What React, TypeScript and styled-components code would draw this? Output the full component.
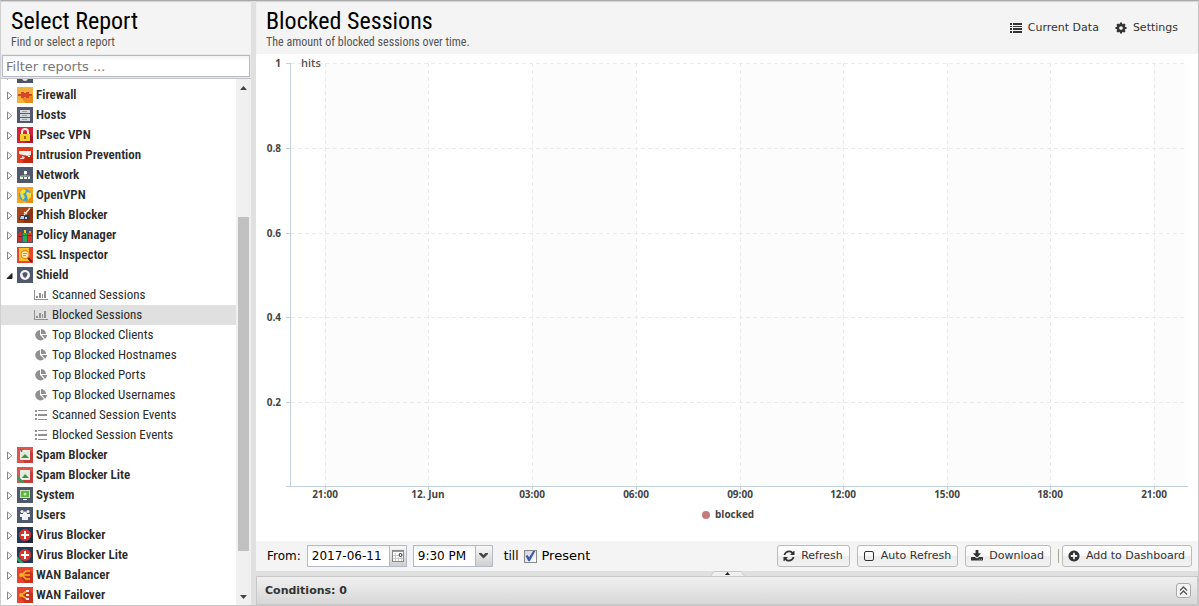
import React, { useLayoutEffect, useRef } from "react";
import styled, { createGlobalStyle } from "styled-components";

const condensed = `"Roboto Condensed", "Liberation Sans Narrow", "Arial Narrow", Roboto, sans-serif`;
const ui = `"DejaVu Sans", Verdana, sans-serif`;

const GlobalStyle = createGlobalStyle`
  *, *::before, *::after { box-sizing: border-box; }
  body { margin: 0; background: #e0e0e0; color: #000; font: 12px/16px ${ui}; }
  h1, h2, p, ul { margin: 0; padding: 0; }
  ul { list-style: none; }
  button, input, select { font: inherit; color: inherit; margin: 0; }
`;

const Page = styled.div`
  display: flex;
  gap: 5px;
  height: 100vh;
  border: 1px solid #c8c8c8;
  border-top: 1px solid #a9a9a9;
  border-left-color: #d0d0d0;
  overflow: hidden;
`;

const Sidebar = styled.aside`
  display: flex;
  flex-direction: column;
  flex: 0 0 250px;
  min-height: 0;
  background: #f4f4f4;
`;

const Main = styled.main`
  display: flex;
  flex-direction: column;
  flex: 1;
  min-width: 0;
`;

const Header = styled.header`
  display: flex;
  justify-content: space-between;
  flex: none;
  height: 53px;
  padding: 6px 10px 0;
  background: #f4f4f4;
  box-shadow: inset 0 1px 1px #d4d4d4;
`;

const Title = styled.h1`
  font: 400 24px/28px ${condensed};
  color: #000;
`;

const Subtitle = styled.p`
  font: 400 12px/14px ${condensed};
  color: #555;
`;

const FilterBar = styled.div`
  flex: none;
  height: 25px;
  padding: 1px;
  background: #eaeaea;
  border-bottom: 1px solid #c4c4c4;
`;

const FilterInput = styled.input`
  display: block;
  width: 100%;
  height: 22px;
  padding: 0 3px;
  font-size: 13px;
  border: 1px solid #b5b8c8;
  background: linear-gradient(#f0f2f4, #fff 5px);
  outline: none;
  &::placeholder { color: #777; opacity: 1; }
`;

const TreePane = styled.div`
  display: flex;
  flex: 1;
  min-height: 0;
  background: #fff;
`;

const Tree = styled.ul`
  flex: 1;
  min-width: 0;
  overflow: hidden;
`;

const Row = styled.li<{ $child?: boolean; $selected?: boolean }>`
  display: flex;
  align-items: center;
  gap: 3px;
  height: 20px;
  padding-left: ${(p) => (p.$child ? 33 : 4)}px;
  background: ${(p) => (p.$selected ? "#e0e0e0" : "transparent")};
  font: ${(p) => (p.$child ? 400 : 600)} 13px/20px ${condensed};
  color: #2b2b2b;
  white-space: nowrap;
  svg { flex: none; }
`;

const Scrollbar = styled.div`
  display: flex;
  flex-direction: column;
  align-items: center;
  flex: none;
  width: 15px;
  background: #f0f0f0;
`;

const ScrollArrow = styled.button`
  display: flex;
  align-items: center;
  justify-content: center;
  width: 15px;
  height: 17px;
  padding: 0;
  border: 0;
  background: none;
`;

const Track = styled.div`
  display: flex;
  flex-direction: column;
  flex: 1;
  width: 11px;
`;

const Thumb = styled.div`
  flex: 0 0 68%;
  background: #c1c1c1;
`;

const TrackSpace = styled.div`
  flex: 0 0 24.5%;
`;

const HeaderActions = styled.nav`
  display: flex;
  align-items: center;
  gap: 16px;
  height: 42px;
  padding-right: 10px;
`;

const FlatButton = styled.button`
  display: flex;
  align-items: center;
  gap: 6px;
  padding: 0;
  border: 0;
  background: none;
  font-size: 11px;
  color: #333;
`;

const ChartArea = styled.section`
  flex: 1;
  min-height: 0;
  background: #fff;
  svg { display: block; width: 100%; height: 100%; }
`;

const Toolbar = styled.div`
  display: flex;
  align-items: center;
  justify-content: space-between;
  flex: none;
  height: 30px;
  padding: 0 6px 0 11px;
  background: #f4f4f4;
`;

const Group = styled.div<{ $gap: number }>`
  display: flex;
  align-items: center;
  gap: ${(p) => p.$gap}px;
`;

const Label = styled.label<{ $large?: boolean }>`
  font-size: ${(p) => (p.$large ? 13 : 12)}px;
`;

const CheckGroup = styled.div`
  display: flex;
  align-items: center;
  gap: 5px;
  padding-left: 5px;
`;

const Field = styled.span<{ $width: number }>`
  display: flex;
  width: ${(p) => p.$width}px;
  height: 22px;
  border: 1px solid #b5b8c8;
  background: linear-gradient(#f0f2f4, #fff 5px);
`;

const FieldInput = styled.input`
  flex: 1;
  min-width: 0;
  padding: 0 0 0 4px;
  border: 0;
  background: none;
  outline: none;
`;

const FieldSelect = styled.select`
  flex: 1;
  min-width: 0;
  padding: 0 0 0 4px;
  border: 0;
  background: none;
  outline: none;
  appearance: none;
`;

const Trigger = styled.span`
  display: flex;
  align-items: center;
  justify-content: center;
  width: 17px;
  border-left: 1px solid #b5b8c8;
  background: linear-gradient(#f8f8f8, #cfcfcf);
`;

const Check = styled.input`
  appearance: none;
  display: block;
  width: 13px;
  height: 13px;
  border: 1px solid #8a8a8a;
  background: linear-gradient(135deg, #cdd2dc, #fff);
  &:checked::before {
    content: "";
    display: block;
    width: 11px;
    height: 11px;
    background: #3f5aa8;
    clip-path: polygon(10% 50%, 28% 42%, 42% 62%, 78% 5%, 98% 5%, 48% 98%, 36% 98%);
  }
`;

const Button = styled.button`
  display: flex;
  align-items: center;
  gap: 6px;
  height: 22px;
  padding: 0 6px 0 5px;
  border: 1px solid #bbb;
  border-radius: 3px;
  background: linear-gradient(#fff, #f9f9f9 48%, #ececec 52%, #f2f2f2);
  font-size: 11px;
  color: #333;
  white-space: nowrap;
`;

const Separator = styled.span`
  width: 1px;
  height: 14px;
  background: #a8a890;
`;

const Splitter = styled.button`
  display: flex;
  justify-content: center;
  flex: none;
  width: 100%;
  height: 5px;
  padding: 0;
  border: 0;
  background: #e0e0e0;
`;

const Conditions = styled.footer`
  display: flex;
  align-items: center;
  justify-content: space-between;
  flex: none;
  height: 29px;
  padding: 0 6px 0 8px;
  border: 1px solid #c8c8c8;
  background: linear-gradient(#f0f0f0, #d7d7d7);
`;

const ConditionsTitle = styled.h2`
  font: 700 11px/16px ${ui};
  color: #333;
`;

const ExpandButton = styled.button`
  display: flex;
  align-items: center;
  justify-content: center;
  width: 15px;
  height: 15px;
  padding: 0;
  border: 1px solid #aaa;
  border-radius: 3px;
  background: #f4f4f4;
`;

const glyphs = {
  refresh:
    "M1639 1056q0 5-1 7-64 268-268 434.5t-478 166.5q-146 0-282.5-55t-243.5-157l-129 129q-19 19-45 19t-45-19-19-45v-448q0-26 19-45t45-19h448q26 0 45 19t19 45-19 45l-137 137q71 66 161 102t187 36q134 0 250-65t186-179q11-17 53-117 8-23 30-23h192q13 0 22.5 9.5t9.5 22.5zm25-800v448q0 26-19 45t-45 19h-448q-26 0-45-19t-19-45 19-45l138-138q-148-137-349-137-134 0-250 65t-186 179q-11 17-53 117-8 23-30 23h-199q-13 0-22.5-9.5t-9.5-22.5v-7q65-268 270-434.5t480-166.5q146 0 284 55.5t245 156.5l130-129q19-19 45-19t45 19 19 45z",
  download:
    "M1344 1344q0-26-19-45t-45-19-45 19-19 45 19 45 45 19 45-19 19-45zm256 0q0-26-19-45t-45-19-45 19-19 45 19 45 45 19 45-19 19-45zm128-224v320q0 40-28 68t-68 28h-1472q-40 0-68-28t-28-68v-320q0-40 28-68t68-28h465l135 136q58 56 136 56t136-56l136-136h464q40 0 68 28t28 68zm-325-569q17 41-14 70l-448 448q-18 19-45 19t-45-19l-448-448q-31-29-14-70 17-39 59-39h256v-448q0-26 19-45t45-19h256q26 0 45 19t19 45v448h256q42 0 59 39z",
  plus: "M1344 960v-128q0-26-19-45t-45-19h-256v-256q0-26-19-45t-45-19h-128q-26 0-45 19t-19 45v256h-256q-26 0-45 19t-19 45v128q0 26 19 45t45 19h256v256q0 26 19 45t45 19h128q26 0 45-19t19-45v-256h256q26 0 45-19t19-45zm320-64q0 209-103 385.5t-279.5 279.5-385.5 103-385.5-103-279.5-279.5-103-385.5 103-385.5 279.5-279.5 385.5-103 385.5 103 279.5 279.5 103 385.5z",
  cog: "M1152 896q0-106-75-181t-181-75-181 75-75 181 75 181 181 75 181-75 75-181zm512-109v222q0 12-8 23t-20 13l-185 28q-19 54-39 91 35 50 107 138 10 12 10 25t-9 23q-27 37-99 108t-94 71q-12 0-26-9l-138-108q-44 23-91 38-16 136-29 186-7 28-36 28h-222q-14 0-24.5-8.5t-11.5-21.5l-28-184q-49-16-90-37l-141 107q-10 9-25 9-14 0-25-11-126-114-165-168-7-10-7-23 0-12 8-23 15-21 51-66.5t54-70.5q-27-50-41-99l-183-27q-13-2-21-12.5t-8-23.5v-222q0-12 8-23t19-13l186-28q14-46 39-92-40-57-107-138-10-12-10-24 0-10 9-23 26-36 98.5-107.5t94.5-71.5q13 0 26 10l138 107q44-23 91-38 16-136 29-186 7-28 36-28h222q14 0 24.5 8.5t11.5 21.5l28 184q49 16 90 37l142-107q9-9 24-9 13 0 25 10 129 119 165 170 7 8 7 22 0 12-8 23-15 21-51 66.5t-54 70.5q26 50 41 98l183 28q13 2 21 12.5t8 23.5z",
};

const Glyph = ({ name }: { name: keyof typeof glyphs }) => (
  <svg width="12" height="12" viewBox="64 64 1664 1664" fill="#333" aria-hidden>
    <path d={glyphs[name]} />
  </svg>
);

const ListGlyph = () => (
  <svg width="12" height="10" viewBox="0 0 12 10" fill="#333" aria-hidden>
    <path d="M0 0h2v2H0zM3 0h9v2H3zM0 3h2v1H0zM3 3h9v1H3zM0 5h2v2H0zM3 5h9v2H3zM0 8h2v2H0zM3 8h9v2H3z" />
  </svg>
);

const SquareGlyph = () => (
  <svg width="12" height="12" viewBox="0 0 12 12" aria-hidden>
    <rect x="1.5" y="1.5" width="9" height="9" rx="1.5" fill="none" stroke="#333" />
  </svg>
);

const Twisty = ({ open }: { open?: boolean }) => (
  <svg width="9" height="9" viewBox="0 0 9 9" aria-hidden>
    {open ? (
      <path d="M2 7.5h5v-5z" fill="#222" stroke="#222" />
    ) : (
      <path d="M2.5 1v7.4L6.8 4.7z" fill="#fff" stroke="#888" />
    )}
  </svg>
);

const art: Record<string, [string, React.ReactNode]> = {
  Events: ["#4d5468", <circle cx="8" cy="11" r="3" fill="#dfe2e8" />],
  Firewall: [
    "#f4b13e",
    <>
      <path d="M5 11l11-3v8H8z" fill="#ea8c20" />
      <path d="M1 7h14v2H1z" fill="#c84a2a" />
      <path d="M4 5h3v1h2V5h3v6H9v-1H7v1H4z" fill="#d9452b" />
    </>,
  ],
  Hosts: [
    "#50586c",
    <>
      <path d="M3 3h10v3H3zM3 7h10v3H3zM3 11h10v3H3z" fill="#d5d8dd" />
      <path d="M5 4h5v1H5zM5 8h5v1H5zM5 12h5v1H5z" fill="#9aa0ab" />
    </>,
  ],
  "IPsec VPN": [
    "#d5213d",
    <>
      <path d="M8 14l5-7 3 3v6H9z" fill="#a8182f" />
      <path d="M5 7V5a3 3 0 0 1 6 0v2" fill="none" stroke="#f5eadf" strokeWidth="2" />
      <path d="M3 7h10v7H3z" fill="#f7cf2d" />
      <path d="M7 9h2v3H7z" fill="#9a6d16" />
    </>,
  ],
  "Intrusion Prevention": [
    "#e33c1e",
    <>
      <path d="M7 9l6-5 3 3v9H6z" fill="#c22b12" />
      <path d="M2 4h12v4l-3 1-9-2z" fill="#f6f1ef" />
      <path d="M5 9l3 1-1 2H3v-1h2z" fill="#f2cfc7" />
      <path d="M11 9h2v1h-2z" fill="#fff" />
    </>,
  ],
  Network: [
    "#50586c",
    <>
      <path d="M8 6v3M3.500 11V9h9v2" fill="none" stroke="#a9c6a4" />
      <path d="M7 4h3v3H7z" fill="#fff" />
      <path d="M3 10h3v2H3zM7 10h3v2H7zM11 10h2v2h-2z" fill="#eef1ee" />
    </>,
  ],
  OpenVPN: [
    "#fba31c",
    <>
      <path d="M9 14l5-8 2 2v8H9z" fill="#ef8b10" />
      <circle cx="8" cy="8" r="6" fill="#3aa2d6" />
      <path d="M3 5l3-3 3 1-1 3-2 1 2 3-2 3-2-3zM10 5l4 1v4l-3 3-1-4-1-2z" fill="#f1df3c" />
    </>,
  ],
  "Phish Blocker": [
    "#a8471c",
    <>
      <path d="M8 10l6-9 2 2v13H6z" fill="#8b3511" />
      <path d="M3 8h9v5H2z" fill="#2f3a55" />
      <path d="M4 9h3v3H3zM8 10h2v2H8z" fill="#c3d5e2" />
      <path d="M7 8l6-7M7 5l3 2" stroke="#eee3d7" strokeWidth="1.400" />
    </>,
  ],
  "Policy Manager": [
    "#4b5366",
    <>
      <path d="M1 7h4v8H1z" fill="#c92f2f" />
      <path d="M6 6h4v9H6z" fill="#1eb44c" />
      <path d="M11 6h4v9h-4z" fill="#e0392c" />
      <path d="M2 5h2v2H2z" fill="#e02f2f" />
      <path d="M7 3h2v3H7z" fill="#e8d21d" />
      <path d="M12 4h2v2h-2z" fill="#f0a019" />
      <path d="M6 8h4v1H6z" fill="#12863a" />
      <path d="M1 9h4v1H1zM11 8h4v1h-4z" fill="#8d1f1f" />
    </>,
  ],
  "SSL Inspector": [
    "#e7452f",
    <>
      <path d="M2 1h10v13H2z" fill="#f9c623" />
      <circle cx="8" cy="7.500" r="4" fill="#fbe9b5" stroke="#ef8a1c" strokeWidth="1.300" />
      <path d="M6 6h4v1H6zM6 8h3v1H6z" fill="#e08b2b" />
      <path d="M11 11l4 4" stroke="#7c1d14" strokeWidth="2" />
    </>,
  ],
  Shield: [
    "#50586c",
    <>
      <circle cx="8" cy="8" r="5" fill="#f2f3f5" />
      <path d="M5.500 6L8 5l2.500 1c0 3-1 4-2.500 5-1.500-1-2.500-2-2.500-5z" fill="#50586c" />
    </>,
  ],
  "Spam Blocker": [
    "#e0544e",
    <>
      <path d="M6 13l8-9 2 2v10H7z" fill="#c43f3c" />
      <path d="M3 3h10v10H3z" fill="#f1ede4" />
      <path d="M4 5h8v6H4z" fill="#dfe9dc" />
      <path d="M4 11l4-4 4 4z" fill="#3a9440" />
      <path d="M3 2l3 2-2 1z" fill="#7a4035" />
    </>,
  ],
  "Spam Blocker Lite": [
    "#e0544e",
    <>
      <path d="M6 13l8-9 2 2v10H7z" fill="#c43f3c" />
      <path d="M3 3h10v10H3z" fill="#f1ede4" />
      <path d="M4 5h8v6H4z" fill="#dfe9dc" />
      <path d="M5 11l3-4 4 4z" fill="#3a9440" />
      <path d="M0 8l8 8H4L0 12z" fill="#2e9e63" />
    </>,
  ],
  System: [
    "#50586c",
    <>
      <path d="M3 3h10v8H3z" fill="#c4e2b8" />
      <path d="M4 4h8v6H4z" fill="#5cb83a" />
      <circle cx="8" cy="7" r="1.500" fill="#c7eab8" />
      <path d="M6 12h4v1H6z" fill="#fff" />
    </>,
  ],
  Users: [
    "#50586c",
    <g fill="#f0f1f4">
      <circle cx="5" cy="4.500" r="1.500" />
      <circle cx="11" cy="4.500" r="1.500" />
      <circle cx="8" cy="6.500" r="2" />
      <path d="M3 7h10v3H3zM5 9h6v4H5z" />
    </g>,
  ],
  "Virus Blocker": [
    "#263a57",
    <>
      <path d="M8 14l6-7 2 2v7H9z" fill="#1b2a41" />
      <circle cx="8" cy="8" r="6" fill="#d7352d" />
      <path d="M7 4h2v3h3v2H9v3H7V9H4V7h3z" fill="#fff" />
    </>,
  ],
  "Virus Blocker Lite": [
    "#263a57",
    <>
      <circle cx="8" cy="8" r="6" fill="#d7352d" />
      <path d="M7 4h2v3h3v2H9v3H7V9H4V7h3z" fill="#fff" />
      <path d="M0 9l7 7H3L0 13z" fill="#2e9e63" />
    </>,
  ],
  "WAN Balancer": [
    "#e8432e",
    <>
      <path d="M3 9l9-6 4 4v9H8z" fill="#c9321f" />
      <path d="M3 8h10M13 4H9L5 8l4 4h4" fill="none" stroke="#f7b21d" strokeWidth="1.600" />
      <circle cx="4" cy="8" r="2" fill="#f7b21d" />
    </>,
  ],
  "WAN Failover": [
    "#e8432e",
    <>
      <path d="M3 9l9-6 4 4v9H8z" fill="#c9321f" />
      <path d="M10 4L4 8l6 4" fill="none" stroke="#f7b21d" strokeWidth="1.600" />
      <circle cx="4" cy="8" r="2" fill="#f7b21d" />
      <path d="M9 3h3v2H9zM9 7h3v2H9zM9 11h3v2H9z" fill="#f4e5e2" />
    </>,
  ],
};

const AppIcon = ({ name }: { name: string }) => (
  <svg width="16" height="16" viewBox="0 0 16 16" aria-hidden>
    <rect width="16" height="16" fill={art[name][0]} />
    {art[name][1]}
  </svg>
);

type Kind = "bars" | "pie" | "list";

const ReportIcon = ({ kind }: { kind: Kind }) => (
  <svg width="15" height="12" viewBox="0 0 15 12" fill="#909090" aria-hidden>
    {kind === "bars" && (
      <path d="M0 1h1v10H0zM0 10h14v1H0zM2 7h2v2H2zM5 4h2v5H5zM8 5h1v4H8zM10 2h2v7h-2z" />
    )}
    {kind === "pie" && <path d="M6 1v5l4 4A5.200 5.200 0 1 1 6 1zM7 0a5 5 0 0 1 5 5H7zM8 6h5a5 5 0 0 1-2 4z" />}
    {kind === "list" && (
      <path d="M1 1h2v2H1zM4 1h9v1H4zM1 5h2v2H1zM4 5h9v2H4zM1 9h2v2H1zM4 10h9v1H4z" />
    )}
  </svg>
);

const shieldReports: [string, Kind][] = [
  ["Scanned Sessions", "bars"],
  ["Blocked Sessions", "bars"],
  ["Top Blocked Clients", "pie"],
  ["Top Blocked Hostnames", "pie"],
  ["Top Blocked Ports", "pie"],
  ["Top Blocked Usernames", "pie"],
  ["Scanned Session Events", "list"],
  ["Blocked Session Events", "list"],
];

const ReportTree = () => {
  const ref = useRef<HTMLUListElement>(null);
  useLayoutEffect(() => {
    if (ref.current) ref.current.scrollTop = 14;
  }, []);
  return (
    <Tree ref={ref}>
      {Object.keys(art).map((name) => (
        <React.Fragment key={name}>
          <Row>
            <Twisty open={name === "Shield"} />
            <AppIcon name={name} />
            {name}
          </Row>
          {name === "Shield" &&
            shieldReports.map(([label, kind]) => (
              <Row key={label} $child $selected={label === "Blocked Sessions"}>
                <ReportIcon kind={kind} />
                {label}
              </Row>
            ))}
        </React.Fragment>
      ))}
    </Tree>
  );
};

const xTicks: [number, string][] = [
  [69, "21:00"],
  [172, "12. Jun"],
  [276, "03:00"],
  [380, "06:00"],
  [484, "09:00"],
  [587, "12:00"],
  [691, "15:00"],
  [794, "18:00"],
  [898, "21:00"],
];
const yTicks: [number, string][] = [
  [9, "1"],
  [94, "0.8"],
  [179, "0.6"],
  [263, "0.4"],
  [348, "0.2"],
];

const SessionsChart = () => (
  <svg
    viewBox="0 0 942 487"
    role="img"
    aria-label="Blocked sessions"
    fontFamily={`"Open Sans", "Noto Sans", sans-serif`}
    fontSize="10"
    fontWeight="700"
    fill="#444"
  >
    {xTicks.map(([x], i) =>
      i % 2 === 0 ? (
        <rect key={x} x={x} y="9" width={(xTicks[i + 1]?.[0] ?? 931) - x} height="423" fill="#fcfcfc" />
      ) : null
    )}
    <g stroke="#ebebeb" strokeDasharray="4 3" shapeRendering="crispEdges">
      {yTicks.map(([y]) => (
        <path key={y} d={`M35 ${y}.5H931`} />
      ))}
      {xTicks.map(([x]) => (
        <path key={x} d={`M${x}.5 9V432`} />
      ))}
    </g>
    <g stroke="#c0d0e0" shapeRendering="crispEdges">
      <path d="M34.5 9V432M30 432.5H932" />
      {yTicks.map(([y]) => (
        <path key={y} d={`M30 ${y}.5H34`} />
      ))}
      {xTicks.map(([x]) => (
        <path key={x} d={`M${x}.5 433v3`} />
      ))}
    </g>
    {yTicks.map(([y, label]) => (
      <text key={label} x="25" y={y + 4} textAnchor="end">
        {label}
      </text>
    ))}
    {xTicks.map(([x, label]) => (
      <text key={x} x={x} y="444" textAnchor="middle">
        {label}
      </text>
    ))}
    <text x="45" y="13" fontSize="11" fontWeight="600" fill="#555">
      hits
    </text>
    <circle cx="450" cy="461" r="4" fill="#c57b7d" />
    <text x="459" y="464">
      blocked
    </text>
  </svg>
);

export default function App() {
  return (
    <>
      <GlobalStyle />
      <Page>
        <Sidebar>
          <Header>
            <div>
              <Title as="h2">Select Report</Title>
              <Subtitle>Find or select a report</Subtitle>
            </div>
          </Header>
          <FilterBar>
            <FilterInput type="text" aria-label="Filter reports" placeholder="Filter reports ..." />
          </FilterBar>
          <TreePane>
            <ReportTree />
            <Scrollbar>
              <ScrollArrow aria-label="Scroll up">
                <svg width="7" height="4" viewBox="0 0 7 4" aria-hidden>
                  <path d="M0 4h7L3.500 0z" fill="#444" />
                </svg>
              </ScrollArrow>
              <Track>
                <TrackSpace />
                <Thumb />
              </Track>
              <ScrollArrow aria-label="Scroll down">
                <svg width="7" height="4" viewBox="0 0 7 4" aria-hidden>
                  <path d="M0 0h7L3.500 4z" fill="#444" />
                </svg>
              </ScrollArrow>
            </Scrollbar>
          </TreePane>
        </Sidebar>
        <Main>
          <Header>
            <div>
              <Title>Blocked Sessions</Title>
              <Subtitle>The amount of blocked sessions over time.</Subtitle>
            </div>
            <HeaderActions>
              <FlatButton>
                <ListGlyph />
                Current Data
              </FlatButton>
              <FlatButton>
                <Glyph name="cog" />
                Settings
              </FlatButton>
            </HeaderActions>
          </Header>
          <ChartArea>
            <SessionsChart />
          </ChartArea>
          <Toolbar>
            <Group $gap={6}>
              <Label htmlFor="from-date">From:</Label>
              <Field $width={100}>
                <FieldInput id="from-date" type="text" defaultValue="2017-06-11" />
                <Trigger aria-hidden>
                  <svg width="12" height="12" viewBox="0 0 12 12">
                    <rect x="0.500" y="0.500" width="11" height="11" fill="#fff" stroke="#888" />
                    <path d="M1 1h10v1H1z" fill="#999" />
                    <path d="M3.500 3v8M6.500 7v4M9.500 7v4M1 5.500h5M1 8.500h10" stroke="#ccc" />
                    <circle cx="8.500" cy="5" r="1.500" fill="#fff" stroke="#222" />
                  </svg>
                </Trigger>
              </Field>
              <Field $width={80}>
                <FieldSelect aria-label="From time" defaultValue="9:30 PM">
                  <option>9:30 PM</option>
                </FieldSelect>
                <Trigger aria-hidden>
                  <svg width="9" height="6" viewBox="0 0 9 6">
                    <path d="M0 0h2.500l2 2 2-2H9v1L4.500 5.500 0 1z" fill="#444" />
                  </svg>
                </Trigger>
              </Field>
              <CheckGroup>
                <Label htmlFor="present">till</Label>
                <Check id="present" type="checkbox" defaultChecked />
                <Label htmlFor="present" $large>
                  Present
                </Label>
              </CheckGroup>
            </Group>
            <Group $gap={7}>
              <Button>
                <Glyph name="refresh" />
                Refresh
              </Button>
              <Button>
                <SquareGlyph />
                Auto Refresh
              </Button>
              <Button>
                <Glyph name="download" />
                Download
              </Button>
              <Group $gap={3}>
                <Separator />
                <Button>
                  <Glyph name="plus" />
                  Add to Dashboard
                </Button>
              </Group>
            </Group>
          </Toolbar>
          <Splitter aria-label="Expand conditions">
            <svg width="35" height="5" viewBox="0 0 35 5" aria-hidden>
              <path d="M0.500 5L4 0.500h27L34.500 5" fill="#efefef" stroke="#c8c8c8" />
              <path d="M15 4h5l-2.500-3z" fill="#222" />
            </svg>
          </Splitter>
          <Conditions>
            <ConditionsTitle>Conditions: 0</ConditionsTitle>
            <ExpandButton aria-label="Show conditions">
              <svg width="9" height="9" viewBox="0 0 9 9" fill="none" stroke="#555" strokeWidth="1.300" aria-hidden>
                <path d="M1 4.500L4.500 1 8 4.500M1 8.500L4.500 5 8 8.500" />
              </svg>
            </ExpandButton>
          </Conditions>
        </Main>
      </Page>
    </>
  );
}
